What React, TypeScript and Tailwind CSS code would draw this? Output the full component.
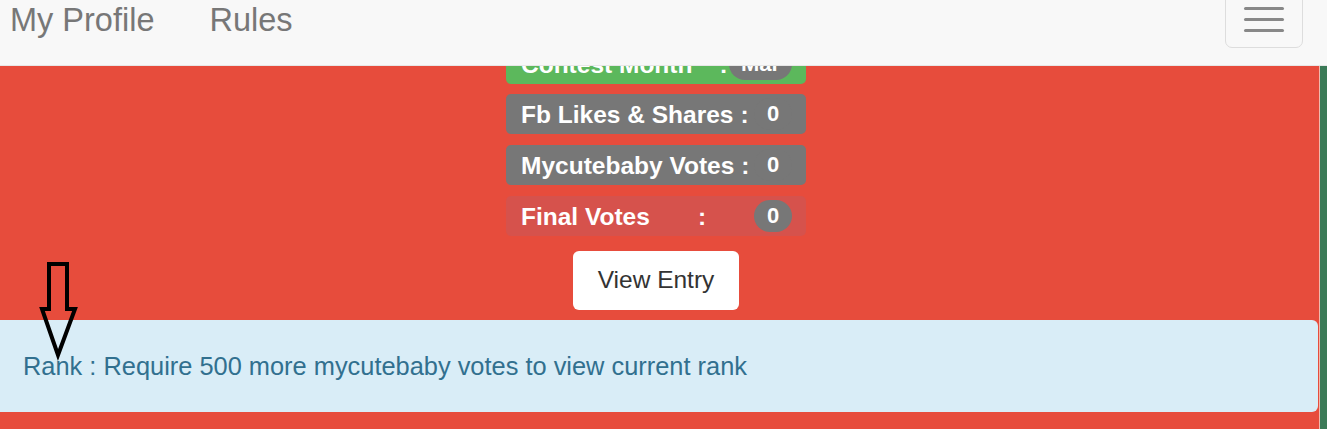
import React from "react";

type Row = { label: string; value: string; bg: string; badge: string; colon: string; mt: string };

const rows: Row[] = [
  { label: "Contest Month", value: "Mar", bg: "bg-[#5cb85c]", badge: "bg-[#777777]", colon: "ml-[27px]", mt: "mt-0" },
  { label: "Fb Likes & Shares", value: "0", bg: "bg-[#777777]", badge: "bg-[#777777]", colon: "ml-[7px]", mt: "mt-[10px]" },
  { label: "Mycutebaby Votes", value: "0", bg: "bg-[#777777]", badge: "bg-[#777777]", colon: "ml-[7px]", mt: "mt-[11px]" },
  { label: "Final Votes", value: "0", bg: "bg-[#d6524c]", badge: "bg-[#777777]", colon: "ml-[48px]", mt: "mt-[11px]" },
];

function StatRow({ row }: { row: Row }) {
  return (
    <div
      className={`${row.mt} w-[300px] h-[40px] rounded-[5px] ${row.bg} flex items-center pl-[15px] pr-[14px] text-white font-bold text-[24.5px] leading-[27px]`}
    >
      <span className="whitespace-pre">{row.label}</span>
      <span className={row.colon}>:</span>
      <span
        className={`ml-auto ${row.badge} rounded-full h-[32px] flex items-center justify-center text-[22px] leading-none ${row.value === "Mar" ? "w-[63px]" : "w-[38px]"}`}
      >
        {row.value}
      </span>
    </div>
  );
}

export default function App() {
  return (
    <div className="relative w-[1327px] h-[429px] overflow-hidden font-['Liberation_Sans',Arial,sans-serif]">
      {/* fixed top navbar, sits over the scrolled content */}
      <nav className="fixed top-0 left-0 right-0 h-[66px] z-10 bg-[#f8f8f8] border-b border-[#e7e7e7] flex items-start">
        <div className="flex gap-[55px] pl-[10px] text-[32.5px] leading-[40px] text-[#777777]">
          <span>My Profile</span>
          <span>Rules</span>
        </div>
        <button className="ml-auto mr-[24px] mt-[-13px] w-[78px] h-[61px] border border-[#dddddd] rounded-[7px] flex flex-col items-center pt-[19px] gap-[8px]">
          <span className="block w-[40px] h-[3px] rounded-full bg-[#888888]" />
          <span className="block w-[40px] h-[3px] rounded-full bg-[#888888]" />
          <span className="block w-[40px] h-[3px] rounded-full bg-[#888888]" />
        </button>
      </nav>

      <div className="flex h-full">
        <main className="w-[1319px] bg-[#e74c3c] flex flex-col">
          <div className="pt-[44px] pr-[7px] flex flex-col items-center">
            {rows.map((r) => (
              <StatRow key={r.label} row={r} />
            ))}
          </div>
          <div className="flex justify-center pr-[7px] mt-[15px]">
            <button className="w-[166px] h-[59px] bg-white rounded-[6px] text-[24.5px] text-[#333333] flex items-center justify-center">
              View Entry
            </button>
          </div>
          <div className="mt-[10px] w-[1318px] h-[92px] bg-[#d9edf7] rounded-r-[6px] flex items-center pl-[23px] text-[25.4px] text-[#31708f]">
            Rank : Require 500 more mycutebaby votes to view current rank
          </div>
        </main>
        <div className="w-px bg-[#f0b9ad]" />
        <div className="flex-1 bg-[#3b7a57]" />
      </div>

      {/* hand-drawn arrow annotation */}
      <svg className="absolute left-0 top-0 pointer-events-none" width="100" height="400">
        <polygon
          points="49,264 67,264 67,309 75,309 58,355 42,309 49,309"
          fill="none"
          stroke="#000"
          strokeWidth="4"
          strokeLinejoin="miter"
        />
      </svg>
    </div>
  );
}
